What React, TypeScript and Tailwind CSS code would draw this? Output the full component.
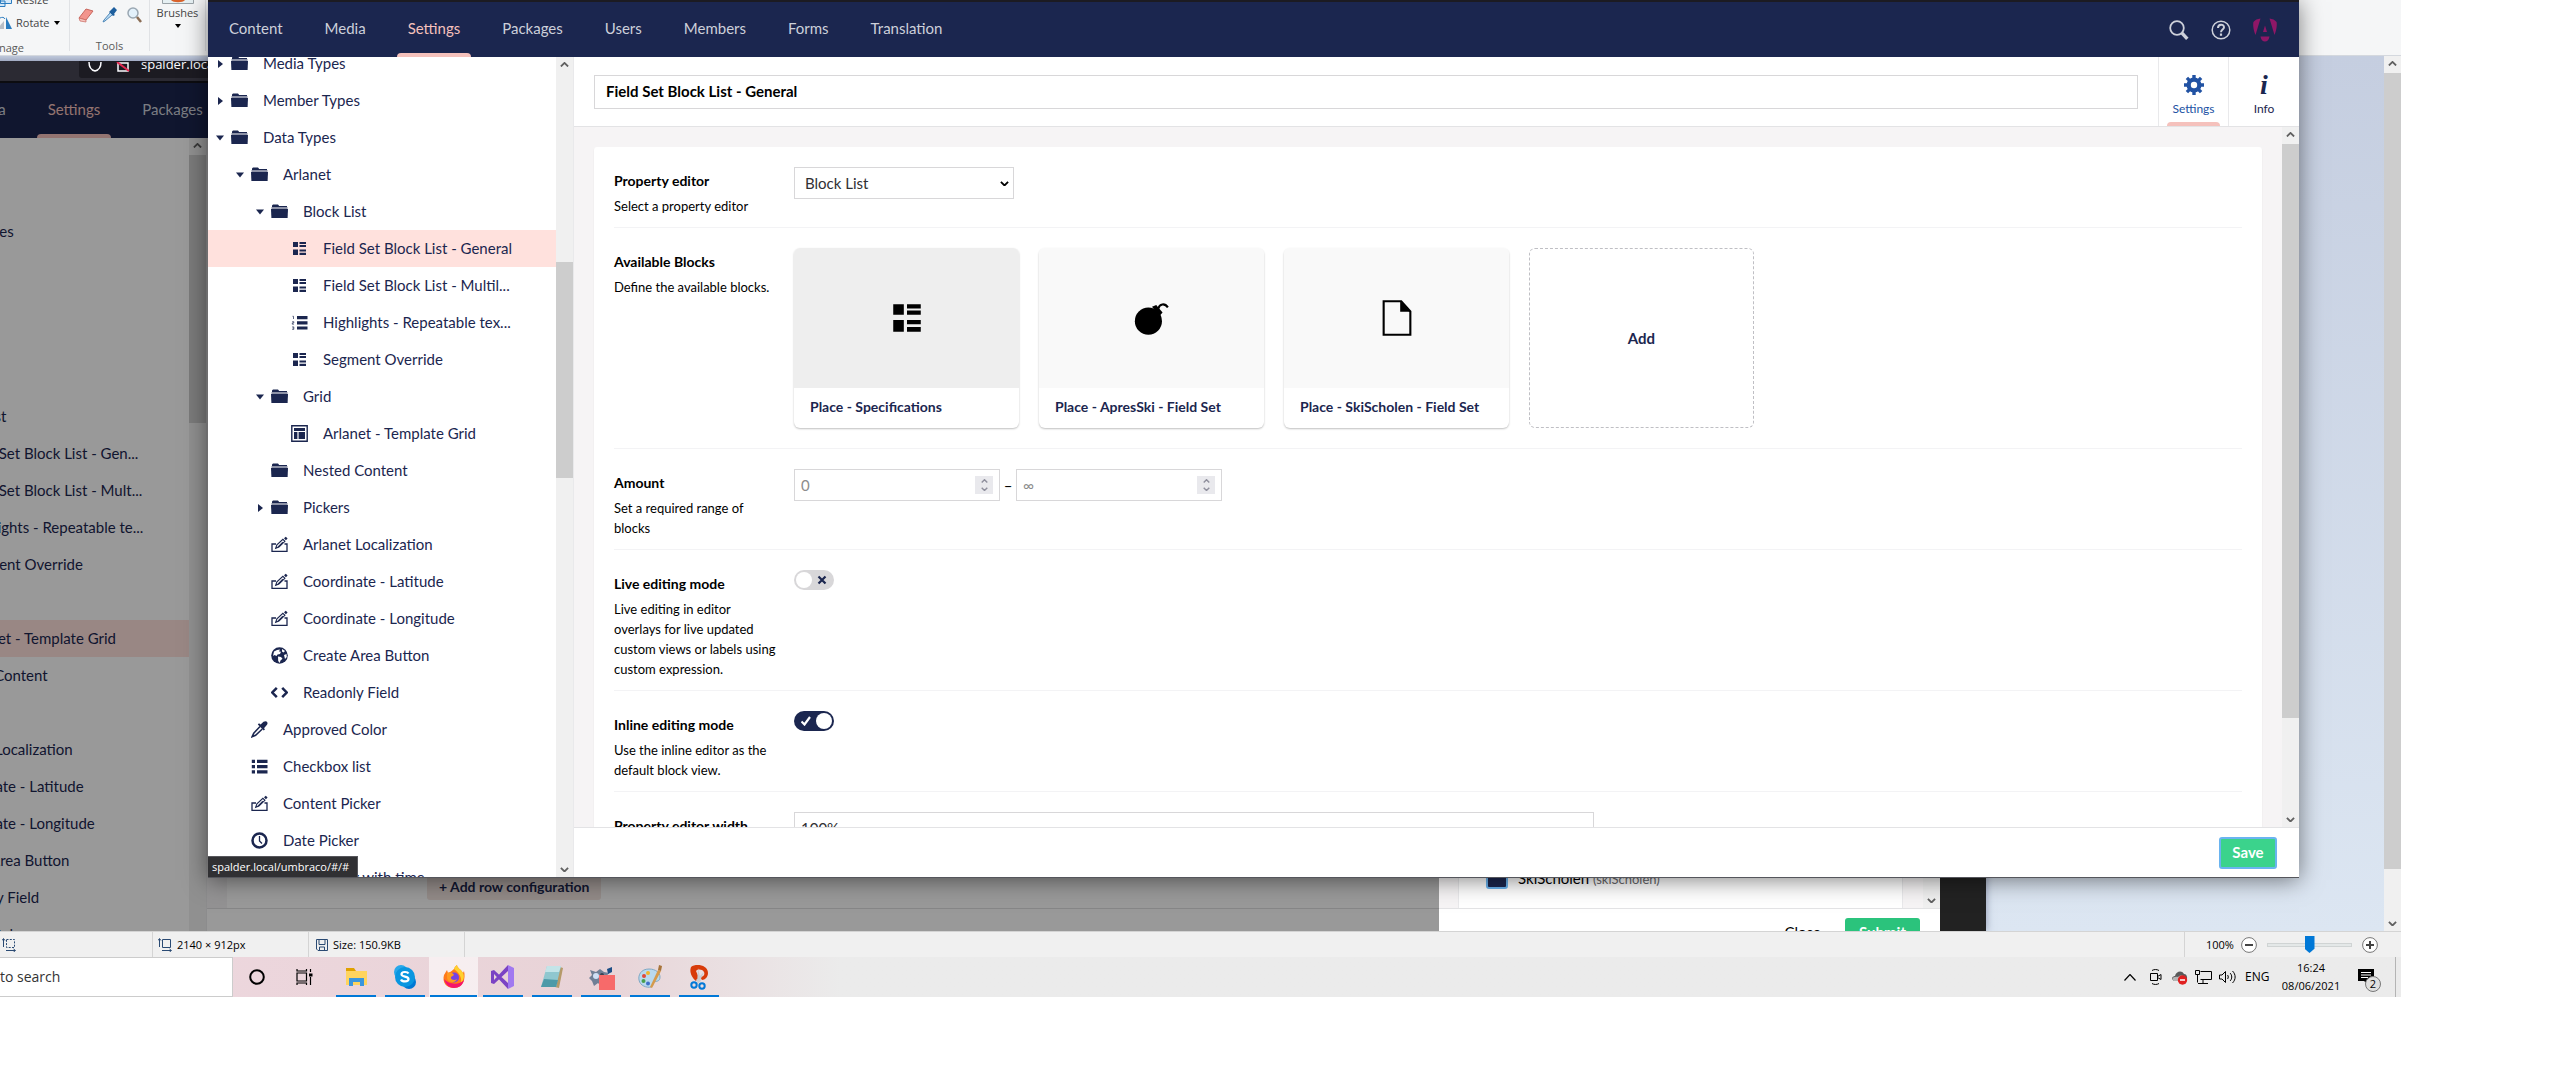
import { useId, type ReactNode } from "react";
import clsx from "clsx";

type IconName =
    | "folder" | "blocks" | "numbered" | "layout" | "edit" | "globe" | "code"
    | "dropper" | "list" | "clock" | "bomb" | "document";

const iconShapes: Record<IconName, ReactNode> = {
    folder: (
        <>
            <path d="M2 1.5h5l1.2 1.5H16v1H1V2.5z" />
            <path d="M.5 4h16v2H.5z" opacity=".5" />
            <path d="M0 6h17l-.4 9H.4z" />
        </>
    ),
    blocks: (
        <path d="M2 2h5v5H2zM8.500 2H15v2H8.500zM8.500 5H15v2H8.500zM2 9.500h5V15H2zM8.500 9.500H15v2H8.500zM8.500 12.700H15V15H8.500z" />
    ),
    numbered: (
        <>
            <path d="M6 2h10.500v3.200H6zM6 7.200h10.500v3.200H6zM6 12.400h10.500v3.200H6z" />
            <path d="M1.500 2.300h1V5M1.200 7.700h1.600v1.200H1.300v1.300h1.600M1.200 12.900h1.600v2.500H1.200M1.500 14.100h1.200" fill="none" stroke="currentColor" strokeWidth=".7" />
        </>
    ),
    layout: (
        <>
            <path d="M.8.800h15.400v15.400H.8z" fill="none" stroke="currentColor" strokeWidth="1.400" />
            <path d="M3 3h11v3H3zM3 7h3.400v7H3zM7.600 7H14v7H7.600z" />
        </>
    ),
    edit: (
        <>
            <path d="M5 8H1v7.300h15V8h-2.500" fill="none" stroke="currentColor" strokeWidth="1.300" />
            <path d="m4.700 12.300 1.200-3.500 6-5.500 2 2-6 5.700z" fill="none" stroke="currentColor" strokeWidth="1.100" />
            <path d="m13 2.300 1.800-1.600 1.800 1.800-1.700 1.700zM6.500 10.800l5-5 .6.600-5 5z" />
        </>
    ),
    globe: (
        <>
            <circle cx="8.500" cy="8.500" r="8.300" />
            <path d="M3 4.500 6 3l3-.5-1 2 2 .3-1 2.200-2.500.5-1 1.500L3.500 8 2 9zM11 2l3 2-1.500 1.500L11 4.500zM7 9.500l3 .5 1.500 1.800-2 1.700-.8 2.500-1.500-2zM13 8l2.500-1 .3 3-1.800 2z" fill="white" />
        </>
    ),
    code: <path d="m5.800 3.800-4.500 4.700 4.500 4.700M11.200 3.800l4.500 4.700-4.500 4.700" fill="none" stroke="currentColor" strokeWidth="2.500" />,
    dropper: (
        <>
            <path d="M9.600 3.600 12.500.8c3-1.800 5 .8 3.500 3l-3 3.500 1 1-1.200 1.200-6-6L8 2.300z" />
            <path d="m9 5.500-6.300 6.800L1 15.800l3.600-1.500L11.300 8" fill="none" stroke="currentColor" strokeWidth="1.500" />
        </>
    ),
    list: (
        <path d="M6 1.800h10.500V5H6zM6 7h10.500v3.200H6zM6 12.200h10.500v3.200H6zM.800 1.800H4V5H.800zM.800 7H4v3.200H.800zM.800 12.200H4v3.200H.800z" />
    ),
    clock: (
        <>
            <circle cx="8.500" cy="8.500" r="7" fill="none" stroke="currentColor" strokeWidth="2.500" />
            <path d="M8.500 4v5l2.500 2.500" fill="none" stroke="currentColor" strokeWidth="1.300" />
        </>
    ),
    bomb: (
        <>
            <circle cx="6.800" cy="10" r="6.400" />
            <path d="m8.500 3.200 2-.8 3 3.500-1.500 1.700z" />
            <path d="M11.500 4c.5-2.200 3-2.700 4.500-.500" fill="none" stroke="currentColor" strokeWidth="1" />
        </>
    ),
    document: (
        <>
            <path d="M2.200.6h8.300l4.300 4.800v11H2.200z" fill="none" stroke="currentColor" strokeWidth="1" />
            <path d="M10 .6v5h4.800z" />
        </>
    ),
};

const Icon = ({ name, className }: { name: IconName; className?: string }) => (
    <svg viewBox="0 0 17 17" fill="currentColor" aria-hidden className={clsx("shrink-0", className)}>
        {iconShapes[name]}
    </svg>
);

const Chevron = ({ up, className }: { up?: boolean; className?: string }) => (
    <svg viewBox="0 0 10 6" className={clsx("shrink-0", className)} fill="none" stroke="currentColor" strokeWidth="2" aria-hidden>
        <path d={up ? "M1 5l4-4 4 4" : "M1 1l4 4 4-4"} />
    </svg>
);

interface ScrollbarProps {
    // Tailwind classes that give the thumb its offset and height
    thumb: string;
    className?: string;
}

const Scrollbar = ({ thumb, className }: ScrollbarProps) => (
    <div className={clsx("flex w-[17px] shrink-0 flex-col items-center bg-[#f0f0f0] text-[#606060]", className)}>
        <Chevron up className="mt-[5px] w-[9px]" />
        <div className={clsx("w-full bg-[#cdcdcd]", thumb)} />
        <Chevron className="mt-auto mb-[5px] w-[9px]" />
    </div>
);

interface TreeItem {
    label: string;
    level: 1 | 2 | 3 | 4;
    icon: IconName;
    open?: boolean;
}

const indent = { 1: "pl-2", 2: "pl-7", 3: "pl-12", 4: "pl-[68px]" };

const buildTree = (general: string, multi: string, highlights: string): TreeItem[] => [
    { label: "Media Types", level: 1, icon: "folder", open: false },
    { label: "Member Types", level: 1, icon: "folder", open: false },
    { label: "Data Types", level: 1, icon: "folder", open: true },
    { label: "Arlanet", level: 2, icon: "folder", open: true },
    { label: "Block List", level: 3, icon: "folder", open: true },
    { label: general, level: 4, icon: "blocks" },
    { label: multi, level: 4, icon: "blocks" },
    { label: highlights, level: 4, icon: "numbered" },
    { label: "Segment Override", level: 4, icon: "blocks" },
    { label: "Grid", level: 3, icon: "folder", open: true },
    { label: "Arlanet - Template Grid", level: 4, icon: "layout" },
    { label: "Nested Content", level: 3, icon: "folder" },
    { label: "Pickers", level: 3, icon: "folder", open: false },
    { label: "Arlanet Localization", level: 3, icon: "edit" },
    { label: "Coordinate - Latitude", level: 3, icon: "edit" },
    { label: "Coordinate - Longitude", level: 3, icon: "edit" },
    { label: "Create Area Button", level: 3, icon: "globe" },
    { label: "Readonly Field", level: 3, icon: "code" },
    { label: "Approved Color", level: 2, icon: "dropper" },
    { label: "Checkbox list", level: 2, icon: "list" },
    { label: "Content Picker", level: 2, icon: "edit" },
    { label: "Date Picker", level: 2, icon: "clock" },
    { label: "Date Picker with time", level: 2, icon: "clock" },
];

const frontTree = buildTree(
    "Field Set Block List - General",
    "Field Set Block List - Multil...",
    "Highlights - Repeatable tex..."
);

const backTree: TreeItem[] = [
    { label: "Document Types", level: 1, icon: "folder", open: false },
    ...buildTree("Field Set Block List - Gen...", "Field Set Block List - Mult...", "Highlights - Repeatable te...").slice(0, 19),
];

const Tree = ({ items, selected, className }: { items: TreeItem[]; selected: string; className?: string }) => (
    <div className="min-w-0 flex-1 overflow-hidden bg-white">
        <ul className={className}>
            {items.map((item) => (
                <li
                    key={item.label}
                    className={clsx("flex h-[37px] items-center", indent[item.level], item.label === selected && "bg-[#ffe1dd]")}
                >
                    <span className="w-[15px] shrink-0">
                        {item.open !== undefined && (
                            <svg viewBox="0 0 8 8" className="size-2" fill="currentColor" aria-hidden>
                                <path d={item.open ? "M0 1.500h8L4 6.500z" : "M2 0v8l5-4z"} />
                            </svg>
                        )}
                    </span>
                    <Icon name={item.icon} className="size-[17px]" />
                    <a href="#" className="ml-[15px] pb-[2px] whitespace-nowrap">{item.label}</a>
                </li>
            ))}
        </ul>
    </div>
);

const sections = ["Content", "Media", "Settings", "Packages", "Users", "Members", "Forms", "Translation"];

const TopNav = () => (
    <nav className="flex h-[55px] shrink-0 items-stretch bg-[#1b264f] pl-[10px] text-[#cdd0da]">
        <div className="flex gap-5">
            {sections.map((name) => (
                <a key={name} href="#" className={clsx("relative flex items-center px-[11px] pb-[3px]", name === "Settings" && "text-[#f5c1bc]")}>
                    {name}
                    {name === "Settings" && <span className="absolute inset-x-0 bottom-0 h-1 rounded-t-sm bg-[#f5c1bc]" />}
                </a>
            ))}
        </div>
        <div className="ml-auto flex items-center gap-[22px] pr-[22px]">
            <button aria-label="Search">
                <svg viewBox="0 0 20 20" className="size-5" fill="none" stroke="currentColor" aria-hidden>
                    <circle cx="8" cy="8" r="6.800" strokeWidth="1.800" />
                    <path d="m12.800 12.800 5.500 6" strokeWidth="3.400" />
                </svg>
            </button>
            <button aria-label="Help">
                <svg viewBox="0 0 20 20" className="size-5" fill="none" stroke="currentColor" aria-hidden>
                    <circle cx="10" cy="10" r="8.800" strokeWidth="1.500" />
                    <path d="M7 8c0-4.300 6-4.200 6-.8 0 2.300-3 2.300-3 5" strokeWidth="2" />
                    <path d="M10 13.500v2.300" strokeWidth="2.200" />
                </svg>
            </button>
            <button aria-label="Account">
                <svg viewBox="0 0 24 24" className="size-6" fill="#8f1767" aria-hidden>
                    <path d="M7.500.5 2.500 17C0 11 0 6 .4 4 2 2 4.500.8 7.500.5zM16.500.5l5 16.500c2.500-6 2.500-11 2.100-13-1.600-2-4.100-3.200-7.100-3.500zM12 7.500l2 6.500h-4zM7.500 18.500h9c-.3 3-2.200 5-4.500 5s-4.200-2-4.500-5z" />
                </svg>
            </button>
        </div>
    </nav>
);

interface PropertyProps {
    label: string;
    description?: string;
    id?: string;
    last?: boolean;
    children: ReactNode;
}

const Property = ({ label, description, id, last, children }: PropertyProps) => (
    <div className={clsx("mx-5 flex pt-5 pb-[11px] text-black", !last && "border-b border-[#f3f3f5]")}>
        <div className="w-[180px] shrink-0 pt-1 pr-4 leading-5">
            <label htmlFor={id} className="block text-sm leading-5 font-bold">{label}</label>
            {description && <p className="mt-[5px] text-[13px] leading-5">{description}</p>}
        </div>
        <div className="min-w-0 flex-1">{children}</div>
    </div>
);

const NumberBox = ({ id, placeholder, label }: { id?: string; placeholder: string; label: string }) => (
    <div className="flex h-8 w-[206px] items-center border border-[#d8d7d9] pr-[6px]">
        <input
            id={id}
            type="number"
            aria-label={label}
            placeholder={placeholder}
            className="min-w-0 flex-1 pl-[6px] outline-none placeholder:text-[#8c8c8c] [&::-webkit-inner-spin-button]:appearance-none"
        />
        <span className="flex h-[18px] w-[18px] flex-col items-center justify-between bg-[#e9e9ed] py-[3px] text-[#8f8f9d]">
            <Chevron up className="w-[7px]" />
            <Chevron className="w-[7px]" />
        </span>
    </div>
);

const Toggle = ({ id, checked }: { id: string; checked?: boolean }) => (
    <label className={clsx("flex h-5 w-10 items-center rounded-full px-[2px]", checked ? "flex-row-reverse bg-[#1b264f] text-white" : "bg-[#d8d7d9] text-[#1b264f]")}>
        <input id={id} type="checkbox" defaultChecked={checked} className="sr-only" />
        <span className="size-4 rounded-full bg-white" />
        <svg viewBox="0 0 10 10" className="mx-auto size-[10px]" fill="none" stroke="currentColor" strokeWidth="2.200" aria-hidden>
            <path d={checked ? "M.5 5.500l3 3L9 1" : "M1.500 1.500l7 7M8.500 1.500l-7 7"} />
        </svg>
    </label>
);

const blocks: { name: string; icon: IconName }[] = [
    { name: "Place - Specifications", icon: "blocks" },
    { name: "Place - ApresSki - Field Set", icon: "bomb" },
    { name: "Place - SkiScholen - Field Set", icon: "document" },
];

const Editor = () => {
    const uid = useId();
    return (
        <div className="flex min-w-0 flex-1 flex-col border-l border-[#e9e9eb] bg-[#f6f4f5]">
            <header className="flex h-[70px] shrink-0 items-center border-b border-[#e3e3e5] bg-white pl-5">
                <input
                    aria-label="Name"
                    defaultValue="Field Set Block List - General"
                    className="h-[34px] min-w-0 flex-1 border border-[#d8d7d9] pr-3 pb-[2px] pl-[11px] font-bold text-black"
                />
                <div className="ml-5 flex self-stretch text-xs">
                    <button className="relative flex w-[70px] flex-col items-center border-l border-[#e9e9eb] pt-[18px] text-[#2152a3]">
                        <svg viewBox="0 0 20 20" className="size-5" aria-hidden>
                            <path d="M8.300 0h3.400v20H8.300zM0 8.300h20v3.400H0zM1.700 4.100l2.400-2.400 14.200 14.200-2.400 2.400zM15.900 1.700l2.400 2.400L4.100 18.300l-2.400-2.400z" fill="currentColor" />
                            <circle cx="10" cy="10" r="7.500" fill="currentColor" />
                            <circle cx="10" cy="10" r="3.200" fill="white" />
                        </svg>
                        <span className="mt-[6px]">Settings</span>
                        <span className="absolute inset-x-2 bottom-0 h-1 rounded-t-sm bg-[#f5c1bc]" />
                    </button>
                    <button className="flex w-[71px] flex-col items-center border-l border-[#e9e9eb] pt-[18px]">
                        <span className="h-5 font-['Liberation_Serif',serif] text-[28px] leading-5 font-bold italic">i</span>
                        <span className="mt-[6px]">Info</span>
                    </button>
                </div>
            </header>

            <div className="flex min-h-0 flex-1">
                <div className="min-w-0 flex-1 overflow-hidden px-5 pt-5">
                    <div className="rounded-[3px] bg-white shadow-[0_1px_1px_rgba(0,0,0,0.16)]">
                        <Property label="Property editor" description="Select a property editor" id={`${uid}-editor`}>
                            <div className="relative w-[220px]">
                                <select id={`${uid}-editor`} className="h-8 w-full appearance-none border border-[#d8d7d9] bg-white px-[10px] text-[#303033]">
                                    <option>Block List</option>
                                </select>
                                <Chevron className="pointer-events-none absolute top-[14px] right-[5px] w-[9px]" />
                            </div>
                        </Property>
                        <Property label="Available Blocks" description="Define the available blocks.">
                            <div className="mb-[9px] flex gap-5 text-[#1b264f]">
                                {blocks.map((block, i) => (
                                    <button key={block.name} className="flex h-[180px] w-[225px] flex-col overflow-hidden rounded-md bg-white text-left shadow-[0_1px_2px_rgba(0,0,0,0.25)]">
                                        <span className={clsx("flex h-[140px] w-full items-center justify-center text-black", i === 0 ? "bg-[#eeeeee]" : "bg-[#f9f9f9]")}>
                                            <Icon name={block.icon} className="size-9" />
                                        </span>
                                        <span className="px-4 pt-[9px] text-sm leading-5 font-bold">{block.name}</span>
                                    </button>
                                ))}
                                <button className="h-[180px] w-[225px] rounded-md border border-dashed border-[#bfbfc4] font-bold">Add</button>
                            </div>
                        </Property>
                        <Property label="Amount" description="Set a required range of blocks" id={`${uid}-min`}>
                            <div className="flex items-center">
                                <NumberBox id={`${uid}-min`} placeholder="0" label="Minimum amount" />
                                <span className="w-4 text-center">–</span>
                                <NumberBox placeholder="∞" label="Maximum amount" />
                            </div>
                        </Property>
                        <Property
                            label="Live editing mode"
                            description="Live editing in editor overlays for live updated custom views or labels using custom expression."
                            id={`${uid}-live`}
                        >
                            <Toggle id={`${uid}-live`} />
                        </Property>
                        <Property label="Inline editing mode" description="Use the inline editor as the default block view." id={`${uid}-inline`}>
                            <Toggle id={`${uid}-inline`} checked />
                        </Property>
                        <Property label="Property editor width" id={`${uid}-width`} last>
                            <input id={`${uid}-width`} defaultValue="100%" className="h-8 w-[800px] border border-[#d8d7d9] px-[6px] text-[#303033]" />
                        </Property>
                    </div>
                </div>
                <Scrollbar thumb="mt-[7px] h-[574px]" />
            </div>

            <footer className="flex h-[50px] shrink-0 items-center justify-end border-t border-[#e3e3e5] bg-white pr-[22px]">
                <button className="h-8 w-[58px] rounded-[3px] border-2 border-[#6ab4f0] bg-[#3bd38c] pb-[2px] font-bold text-white">Save</button>
            </footer>
        </div>
    );
};

const FrontWindow = () => (
    <div className="absolute top-0 right-[261px] bottom-[202px] left-52 flex flex-col border-b border-[#55565c] bg-white text-[#1b264f] shadow-[0_2px_22px_rgba(0,0,0,0.5)]">
        <div className="h-[2px] shrink-0 bg-[#1c1b22]" />
        <TopNav />
        <div className="flex min-h-0 flex-1">
            <div className="flex w-[365px] shrink-0">
                <Tree items={frontTree} selected="Field Set Block List - General" className="-mt-3" />
                <Scrollbar thumb="mt-[195px] h-[216px]" />
            </div>
            <Editor />
        </div>
        <div className="absolute bottom-0 left-0 border-t border-r border-[#57575c] bg-[#303033] pr-2 pl-1 font-['Open_Sans',sans-serif] text-[11px] leading-5 text-white">
            spalder.local/umbraco/#/#
        </div>
    </div>
);

// The earlier capture that is open on the Paint canvas
const PastedCapture = () => (
    <div className="absolute top-[5px] right-[398px] bottom-0 left-[-152px] flex flex-col bg-[#2b2a33] text-[#1b264f] shadow-[0_0_8px_rgba(60,70,110,0.5)]">
        <div className="flex h-[22px] shrink-0 items-start border-b-2 border-[#0c0c10] pl-[231px]">
            <div className="flex h-[17px] w-[700px] items-start overflow-hidden rounded-b-[3px] bg-[#1c1b22] pl-[9px] text-[#fbfbfe]">
                <svg viewBox="0 0 14 10" className="mt-px h-[10px] w-[14px]" fill="none" stroke="currentColor" strokeWidth="1.500" aria-hidden>
                    <path d="M1 0c0 5 2 8 6 9 4-1 6-4 6-9" />
                </svg>
                <svg viewBox="0 0 14 10" className="mt-px ml-[14px] h-[10px] w-[14px]" fill="none" stroke="currentColor" strokeWidth="1.500" aria-hidden>
                    <path d="M2 1h10v8H2z" />
                    <path d="m1 0 12 9" stroke="#e22850" strokeWidth="2" />
                </svg>
                <span className="-mt-[7px] ml-[11px] font-['Open_Sans',sans-serif] text-[13px] leading-5">spalder.local</span>
            </div>
        </div>
        <div className="relative flex min-h-0 flex-1 flex-col">
            <TopNav />
            <div className="flex min-h-0 flex-1 bg-white">
                <div className="flex w-[358px] shrink-0">
                    <Tree items={backTree} selected="Arlanet - Template Grid" className="pt-[75px]" />
                    <Scrollbar thumb="mt-[7px] h-[268px]" className="-mb-5" />
                </div>
                <div className="flex min-w-0 flex-1 flex-col justify-end border-l border-[#e9e9eb]">
                    <div className="flex flex-1 items-end border-b border-[#e0e0e2] bg-[#f6f4f5] pl-5">
                        <div className="flex h-full flex-1 items-end bg-white pb-2 pl-[200px]">
                            <button className="h-8 rounded-[3px] bg-[#f3e6e2] px-3 pt-[6px] text-sm font-bold">+ Add row configuration</button>
                        </div>
                    </div>
                    <div className="h-[22px]" />
                </div>
            </div>
            <div className="absolute inset-0 bg-black/40" />
            <div className="absolute inset-y-0 right-0 w-[46px] bg-[#222222]" />
            <div className="absolute inset-y-0 right-[46px] flex w-[501px] flex-col bg-white">
                <div className="flex flex-1 items-end border-b border-[#e3e3e5] bg-[#f6f4f5] pl-[19px]">
                    <label className="mr-5 flex h-full flex-1 items-end border-x border-[#e9e9eb] bg-white pb-[19px] pl-[27px] text-black">
                        <input type="checkbox" defaultChecked className="size-[22px] appearance-none rounded-[3px] border-2 border-[#6ab4f0] bg-[#1b264f]" />
                        <span className="ml-[10px]">
                            SkiScholen <span className="text-[13px] text-[#68676b]">(skiScholen)</span>
                        </span>
                    </label>
                    <Scrollbar thumb="h-96" className="h-full" />
                </div>
                <div className="flex h-[22px] items-start justify-end overflow-hidden pt-[9px] pr-5">
                    <button className="h-8 px-6 pb-1 text-black">Close</button>
                    <button className="h-8 w-[75px] rounded-[3px] bg-[#2bc37c] pb-1 font-bold text-white">Submit</button>
                </div>
            </div>
        </div>
    </div>
);

const Ribbon = () => (
    <div className="flex h-[55px] shrink-0 overflow-hidden bg-[#f5f6f7] text-[11px] leading-4 text-[#444444]">
        <div className="my-1 mt-0 flex w-[70px] flex-col border-r border-[#e0e2e5]">
            <button className="-mt-2 flex items-center gap-1">
                <svg viewBox="0 0 12 14" className="h-[14px] w-3" fill="#d5e8f8" stroke="#2b7cc0" aria-hidden>
                    <path d="M.5 2.500h11v8H.5zM-3 8h8v5.500h-8z" />
                </svg>
                Resize
            </button>
            <button className="mt-[7px] flex items-center gap-1">
                <svg viewBox="0 0 12 14" className="h-[14px] w-3" aria-hidden>
                    <path d="M6 1v12h6z" fill="#2b7cc0" />
                    <path d="M4 5v8h-7z" fill="#b8bec6" />
                    <path d="M0 2c2-1 4-1 5 1" fill="none" stroke="#2b7cc0" />
                </svg>
                Rotate
                <svg viewBox="0 0 6 4" className="w-[6px]" aria-hidden><path d="M0 0h6L3 4z" /></svg>
            </button>
            <span className="mt-[9px] -ml-px text-[#5a5a5a]">nage</span>
        </div>
        <div className="mb-1 flex w-20 flex-col items-center border-r border-[#e0e2e5]">
            <div className="mt-[7px] flex gap-2">
                <svg viewBox="0 0 16 16" className="size-4" aria-label="Eraser">
                    <path d="m1 11 7-9 7 2-7 9z" fill="#f2958d" stroke="#c9675e" />
                    <path d="m1 11 7 2v2l-6-1z" fill="#f7c6c0" stroke="#c9675e" strokeWidth=".7" />
                </svg>
                <svg viewBox="0 0 16 16" className="size-4" aria-label="Color picker">
                    <path d="m8 4 4-4 3 3-3 4 1 1-2 1-4-4z" fill="#1e5f9e" />
                    <path d="m8 6-6 7-1 2 2-1 7-6" fill="#bcdcf4" stroke="#4d87b8" />
                </svg>
                <svg viewBox="0 0 16 16" className="size-4" aria-label="Magnifier">
                    <circle cx="7" cy="6" r="5" fill="#e3f1fb" stroke="#9aa7b2" strokeWidth="1.500" />
                    <path d="m11 10 4 5" stroke="#8a6d55" strokeWidth="2.500" />
                </svg>
            </div>
            <span className="mt-[15px] text-[#5a5a5a]">Tools</span>
        </div>
        <button className="mb-1 flex w-14 flex-col items-center border-r border-[#e0e2e5]">
            <svg viewBox="0 0 32 4" className="h-1 w-8" aria-hidden>
                <path d="M.5-1h31v4.500H.5z" fill="#e6f0f3" stroke="#9aa3a8" />
                <path d="M9 0h14c-2 3-12 3-14 0z" fill="#d9622b" />
            </svg>
            <span className="mt-px">Brushes</span>
            <svg viewBox="0 0 6 4" className="mt-[3px] w-[6px]" aria-hidden><path d="M0 0h6L3 4z" /></svg>
        </button>
    </div>
);

const StatusBar = () => (
    <div className="flex h-[26px] shrink-0 items-stretch border-t border-[#d4d4d4] bg-[#f0f0f0] text-[11px] text-black">
        <div className="flex w-[153px] items-center border-r border-[#d4d4d4] pl-[2px]">
            <svg viewBox="0 0 14 14" className="size-[14px]" fill="none" stroke="#2a4a73" aria-hidden>
                <path d="M1.500 9V1M0 2.500l1.500-2 1.500 2M4 12.500h9M11.500 11l2 1.500-2 1.500" />
                <path d="M4.500 1.500h8v8h-8z" strokeDasharray="2 1.300" />
            </svg>
        </div>
        <div className="flex w-[156px] items-center gap-[5px] border-r border-[#d4d4d4] pl-[5px]">
            <svg viewBox="0 0 14 14" className="size-[14px]" fill="none" stroke="#2a4a73" aria-hidden>
                <path d="M1.500 9V1M0 2.500l1.500-2 1.500 2M4 12.500h9M11.500 11l2 1.500-2 1.500M4.500 1.500h8v8h-8z" />
            </svg>
            2140 × 912px
        </div>
        <div className="flex w-[156px] items-center gap-[5px] border-r border-[#d4d4d4] pl-[7px]">
            <svg viewBox="0 0 12 12" className="size-3" fill="none" stroke="#2a4a73" aria-hidden>
                <path d="M.5.500h11v11H2l-1.500-1.500zM3 .5v5h6v-5M3.500 11.500V8h5v3.500" />
            </svg>
            Size: 150.9KB
        </div>
        <div className="ml-auto flex w-[217px] items-center border-l border-[#d4d4d4] pl-[21px]">
            <label htmlFor="zoom" className="w-8">100%</label>
            <button aria-label="Zoom out" className="ml-[3px]">
                <svg viewBox="0 0 16 16" className="size-4" fill="white" stroke="#777777" aria-hidden>
                    <circle cx="8" cy="8" r="7.400" />
                    <path d="M4 8h8" stroke="#444444" strokeWidth="2" />
                </svg>
            </button>
            <input
                id="zoom"
                type="range"
                defaultValue={50}
                className="mx-[10px] h-1 w-[85px] appearance-none border border-[#d0d4d4] bg-[#e4e8e8] [&::-webkit-slider-thumb]:h-[17px] [&::-webkit-slider-thumb]:w-[10px] [&::-webkit-slider-thumb]:appearance-none [&::-webkit-slider-thumb]:bg-[#0078d7] [&::-webkit-slider-thumb]:[clip-path:polygon(0_0,100%_0,100%_75%,50%_100%,0_75%)]"
            />
            <button aria-label="Zoom in">
                <svg viewBox="0 0 16 16" className="size-4" fill="white" stroke="#777777" aria-hidden>
                    <circle cx="8" cy="8" r="7.400" />
                    <path d="M4 8h8M8 4v8" stroke="#444444" strokeWidth="2" />
                </svg>
            </button>
        </div>
    </div>
);

const apps: { name: string; art: ReactNode; active?: boolean }[] = [
    {
        name: "File Explorer",
        art: (
            <>
                <path d="M2 3h8l2 3h10v4H2z" fill="#e0a100" />
                <path d="M2 6h21v14H2z" fill="#ffd45e" />
                <path d="M5 21v-8h15v8h-4v-4H9v4z" fill="#3a96dd" />
            </>
        ),
    },
    {
        name: "Skype",
        art: (
            <>
                <circle cx="8" cy="7" r="7" fill="#28a8ea" />
                <circle cx="16" cy="17" r="7" fill="#0078d4" />
                <circle cx="12" cy="12" r="10" fill="#0a96e0" />
                <path d="M15.500 8.500c-1-2-7-2.200-7 .8 0 3.200 7 1.500 7 4.800 0 3.200-6.500 2.800-7.500.4" fill="none" stroke="white" strokeWidth="2.200" />
            </>
        ),
    },
    {
        name: "Firefox",
        active: true,
        art: (
            <>
                <path d="M12 4c1-3 3-4 3-4 0 3 4 4 6 8l1-2c2 8-1 17-10 17C4 23 0 17 2 10l3-5 1 3c2-1 4-2 6-4z" fill="#ff7a1a" />
                <path d="M12 4c1-3 3-4 3-4 0 3 4 4 6 8 2 4 0 8-2 10 1-6-2-10-7-14z" fill="#ffd02e" />
                <path d="M2 14c1 5 5 9 10 9s9-3 10-8c-4 5-15 5-20-1z" fill="#f5156c" />
                <circle cx="12" cy="12.500" r="5" fill="#7542e5" />
                <path d="M5 8c4-1 6 0 7 2l-3 2c-1 3 4 4 6 2-2 5-10 4-10-2z" fill="#ff9a1f" />
            </>
        ),
    },
    {
        name: "Visual Studio",
        art: (
            <>
                <path d="m17 0 6 3v18l-6 3z" fill="#a179f0" />
                <path d="M0 6l3-1 14 13v6L3 9v6l14-15v6L3 19l-3-1z" fill="#7b43c4" />
            </>
        ),
    },
    {
        name: "Notepad",
        art: (
            <>
                <path d="m20 2 3 1-4 20-4-1z" fill="#b59a6a" />
                <path d="M7 1h14l-5 21H1z" fill="#8fc7cf" />
                <path d="M7 1h14l-2 6H5z" fill="#c3e4e8" />
                <path d="m1 22 3-8 14 1-2 7z" fill="#4e9aa8" />
            </>
        ),
    },
    {
        name: "Screen Recorder",
        art: (
            <>
                <path d="M1 5l6 2 4-3 4 3 5 1-4 5v6l-4 2-3-3-4 3-2-5-3-3 3-3z" fill="#6f7f96" />
                <circle cx="7" cy="11" r="3" fill="#cfe0f5" />
                <circle cx="13" cy="10" r="2" fill="#3a4454" />
                <path d="M18 4l5-2v5l-4 2z" fill="#1c4e86" />
                <path d="M10 10h16v15H10z" fill="#f76a6a" />
            </>
        ),
    },
    {
        name: "Paint",
        art: (
            <>
                <path d="M11 4C3 4 0 10 1 15c1 6 8 8 12 7 3-1 1-4 3-5s6 0 6-5c0-4-4-8-11-8z" fill="#b9d9ee" stroke="#7fa8c4" />
                <circle cx="6" cy="11" r="2" fill="#e04a3a" />
                <circle cx="10" cy="8" r="2" fill="#f0b52c" />
                <circle cx="5.500" cy="16" r="2" fill="#49a04e" />
                <circle cx="10" cy="18.500" r="2" fill="#3f6fc9" />
                <path d="M12 22 20 5l3 1-9 17z" fill="#d69a4b" />
                <path d="m20 5 1-5 3 1-1 5z" fill="#a8743a" />
            </>
        ),
    },
    {
        name: "Snipping Tool",
        art: (
            <>
                <path d="M4 2c5-4 17-2 17 6 0 4-3 7-6 7l-2-3c4 0 5-3 4-5-2-3-6-3-8-1l3 7-3 3C5 13 2 7 4 2z" fill="#d83b0a" />
                <path d="m11 3 3 13-4 3zM17 7l-5 11-3-3z" fill="#c8ccd0" />
                <circle cx="7" cy="20" r="2.700" fill="none" stroke="#0078d7" strokeWidth="2" />
                <circle cx="15" cy="21" r="2.700" fill="none" stroke="#0078d7" strokeWidth="2" />
            </>
        ),
    },
];

const Taskbar = () => (
    <div className="flex h-10 shrink-0 bg-linear-to-r from-[#efd8e0] via-[#e8d3d7] via-25% to-[#ebebeb] to-35% text-xs text-black">
        <label className="flex w-[233px] items-center border border-l-0 border-[#cccccc] bg-white">
            <input aria-label="Search" defaultValue="to search" className="w-full text-sm text-[#333333] outline-none" />
        </label>
        <button aria-label="Cortana" className="flex w-12 items-center justify-center">
            <svg viewBox="0 0 16 16" className="size-4" fill="none" stroke="currentColor" strokeWidth="2" aria-hidden>
                <circle cx="8" cy="8" r="6.800" />
            </svg>
        </button>
        <button aria-label="Task view" className="flex w-[46px] items-center justify-center">
            <svg viewBox="0 0 17 16" className="h-4 w-[17px]" fill="none" stroke="currentColor" strokeWidth="1.200" aria-hidden>
                <path d="M1 4h9.500v8H1zM1 0v2h9.500V0M1 16v-2h9.500v2M14.500 0v3M14.500 8v8" />
                <path d="M13 4.500h3.500v3H13z" fill="currentColor" stroke="none" />
            </svg>
        </button>
        <div className="ml-1 flex">
            {apps.map((app) => (
                <button
                    key={app.name}
                    aria-label={app.name}
                    className={clsx("flex w-[49px] flex-col items-center justify-end px-1", app.active && "bg-white/60")}
                >
                    <svg viewBox="0 0 24 24" className="mb-[6px] size-6 overflow-visible" aria-hidden>{app.art}</svg>
                    <span className={clsx("h-[2px] bg-[#0078d7]", app.active ? "w-[47px]" : "w-10")} />
                </button>
            ))}
        </div>
        <div className="ml-auto flex items-center text-black">
            <svg viewBox="0 0 12 7" className="w-3" fill="none" stroke="currentColor" strokeWidth="1.200" aria-hidden><path d="m.5 6.500 5.500-6 5.500 6" /></svg>
            <svg viewBox="0 0 12 16" className="ml-[14px] h-4 w-3" fill="none" stroke="currentColor" aria-hidden>
                <path d="M.5 4.500h7v7h-7zM7.500 7.500l3.500-2v5l-3.500-2M2 1.500c2-1.300 5-1.300 7 0M2 14.500c2 1.300 5 1.300 7 0" />
            </svg>
            <svg viewBox="0 0 17 15" className="ml-[9px] h-[15px] w-[17px]" aria-hidden>
                <path d="M1 9c0-3 3-3 3-3 1-5 7-6 9-2 4 0 4 7 1 7H3z" fill="#5a5a5a" />
                <path d="M3 11c-4-3 1-5 4-4 3-3 7-1 7 1v3z" fill="#b5b5b5" />
                <circle cx="11.500" cy="10" r="4.700" fill="#e02020" />
                <path d="M9 10h5" stroke="white" strokeWidth="1.500" />
            </svg>
            <svg viewBox="0 0 17 14" className="ml-[7px] h-[14px] w-[17px]" fill="none" stroke="currentColor" aria-hidden>
                <path d="M5.500 1.500h11v8h-11M3 13.500h10M8 9.500v4M.5.500h4v4h-4zM2.500 4.500v8" />
            </svg>
            <svg viewBox="0 0 17 14" className="ml-[7px] h-[14px] w-[17px]" fill="none" stroke="currentColor" aria-hidden>
                <path d="M.5 5v4H3l3.500 3.500v-11L3 5zM8.500 5c1 1 1 3 0 4M11 3c2.300 2 2.300 6 0 8M13.500 1c3.500 3.500 3.500 8.500 0 12" />
            </svg>
            <span className="ml-[9px] w-6 text-xs">ENG</span>
            <span className="ml-[9px] w-[66px] text-center text-[11px] leading-[18px]">16:24<br />08/06/2021</span>
            <div className="relative ml-[14px] flex w-[37px]">
                <svg viewBox="0 0 16 16" className="size-4" aria-hidden>
                    <path d="M0 0h16v12h-5v4l-5-4H0z" />
                    <path d="M3 3.500h10M3 6h10M3 8.500h7" stroke="white" />
                </svg>
                <span className="absolute top-[7px] left-[7px] flex size-4 items-center justify-center rounded-full border border-[#777777] bg-[#e0e0e0] text-[11px]">2</span>
            </div>
            <span className="h-full w-[6px] border-l border-[#b4b4b4]" />
        </div>
    </div>
);

export default function App() {
    return (
        <div className="relative flex h-screen flex-col overflow-hidden bg-white pr-[159px] pb-[83px] font-[Lato,sans-serif] text-[15px] leading-5">
            <div className="flex min-h-0 flex-1 flex-col font-['Open_Sans',sans-serif]">
                <Ribbon />
                <div className="flex min-h-0 flex-1 border-t border-[#d4d8de]">
                    <div className="relative min-w-0 flex-1 overflow-hidden bg-linear-to-b from-[#c5cee0] to-[#dce6f2] font-[Lato,sans-serif]">
                        <PastedCapture />
                    </div>
                    <Scrollbar thumb="mt-[7px] h-[796px]" />
                </div>
                <StatusBar />
                <Taskbar />
            </div>
            <FrontWindow />
        </div>
    );
}
